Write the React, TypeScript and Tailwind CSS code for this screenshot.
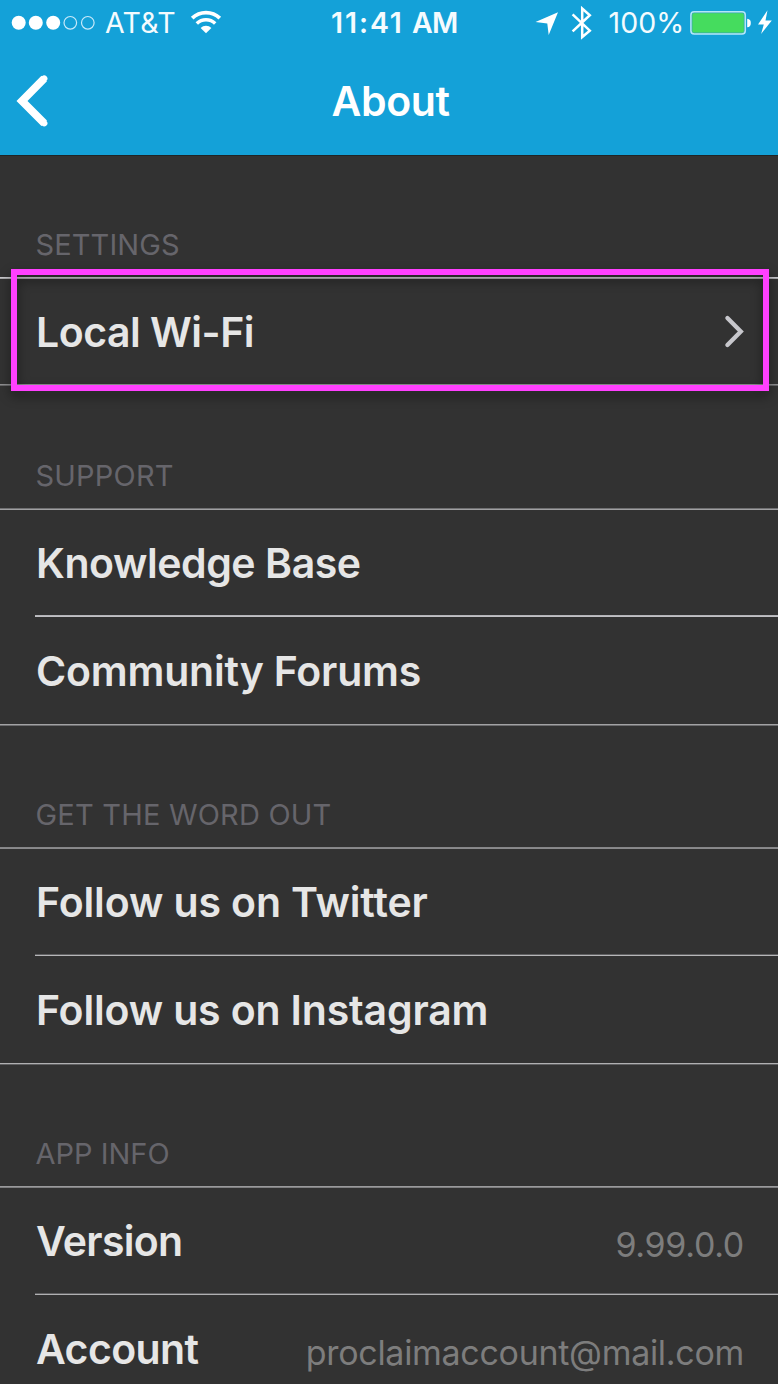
import type { ReactNode } from "react";

function SignalDots() {
  return (
    <svg className="ml-[11px] h-[46px] w-[85px] shrink-0" viewBox="0 0 85 46" fill="none">
      <circle cx="7.7" cy="22.8" r="7" fill="#fff" />
      <circle cx="24.8" cy="22.8" r="7" fill="#fff" />
      <circle cx="42.2" cy="22.8" r="7" fill="#fff" />
      <circle cx="59.3" cy="22.8" r="6.3" stroke="#c9eafa" strokeWidth="1.2" />
      <circle cx="76.8" cy="22.8" r="6.3" stroke="#c9eafa" strokeWidth="1.2" />
    </svg>
  );
}

function WifiIcon() {
  return (
    <svg className="h-[46px] w-[32px] shrink-0" viewBox="190 0 32 46" fill="none">
      <path d="M192.2 18.2a19.8 19.8 0 0 1 27.6 0" stroke="#fff" strokeWidth="3.8" />
      <path d="M196.8 23.4a13.2 13.2 0 0 1 18.4 0" stroke="#fff" strokeWidth="3.5" />
      <path d="M200.6 28a7.8 7.8 0 0 1 10.8 0L206 33.2Z" fill="#fff" />
    </svg>
  );
}

function StatusIcons() {
  return (
    <svg className="h-[46px] w-[60px] shrink-0" viewBox="534 0 60 46" fill="none">
      <path d="M558 12.3 548.7 35 547.3 23.6 535.5 22Z" fill="#fff" />
      <path d="M572.6 14.4 589.8 30.6 582.2 37V8.6L589.8 15.2 572.6 31.4" stroke="#fff" strokeWidth="2.5" />
    </svg>
  );
}

function Battery() {
  return (
    <svg className="h-[46px] w-[88px] shrink-0" viewBox="690 0 88 46" fill="none">
      <rect x="690.9" y="11.7" width="54.4" height="22.3" rx="3.2" fill="#35a9b0" stroke="#b4e6f8" strokeWidth="1.5" />
      <rect x="692.4" y="13.2" width="51.4" height="19.3" rx="1.6" fill="#45dc5e" />
      <path d="M747.2 18.7c2.6.2 3.6 1.8 3.6 4.3s-1 4.1-3.6 4.3Z" fill="#fff" />
      <path d="M767.5 10.3 758 24.4H763.8L761.1 34 771.8 20.6H765.5Z" fill="#fff" />
    </svg>
  );
}

function SectionTitle({ className, children }: { className: string; children: ReactNode }) {
  return (
    <h2 className={`flex shrink-0 items-end pb-[15px] pl-[35.5px] text-[29px] leading-[35px] font-normal text-[#66656b] ${className}`}>
      {children}
    </h2>
  );
}

function Line({ className }: { className: string }) {
  return <div className={`h-[2px] shrink-0 border-y ${className}`} />;
}

function Row({ height, label, children, className = "" }: { height: string; label: string; children?: ReactNode; className?: string }) {
  return (
    <div className={`flex shrink-0 items-center justify-between pr-[34px] pl-[36px] ${height}`}>
      <span className={`text-[41px] leading-[50px] font-semibold text-[#e6e6e6] ${className}`}>{label}</span>
      {children}
    </div>
  );
}

export default function App() {
  return (
    <div className="relative flex h-[1384px] w-[778px] flex-col overflow-hidden bg-[#323232] font-['Inter',sans-serif] whitespace-nowrap">
      <header className="flex h-[155px] shrink-0 flex-col bg-[#14a1d8] text-white">
        <div className="flex h-[46px] items-center text-[28.5px] leading-[46px] text-[#f4fbfe]">
          <SignalDots />
          <span className="ml-[9px] w-[85px] tracking-[0.3px]">AT&amp;T</span>
          <WifiIcon />
          <span className="ml-[109px] flex w-[203px] font-semibold">
            <span className="w-[81px] tracking-[1.9px]">11:41 </span>
            <span className="tracking-[-0.8px]">AM</span>
          </span>
          <StatusIcons />
          <span className="ml-[14.5px] w-[81.5px] tracking-[0.1px]">100%</span>
          <Battery />
        </div>
        <div className="flex h-[109px] items-center">
          <svg className="ml-[14px] h-[60px] w-[40px]" viewBox="14 71 40 60" fill="none">
            <path d="M44.2 78.6 22 101 44.2 123.2" stroke="#fff" strokeWidth="7.8" strokeLinejoin="miter" />
            <path d="M44.2 78.6 22 101 44.2 123.2" stroke="#fff" strokeWidth="6.4" strokeLinecap="round" />
          </svg>
          <h1 className="ml-[277.5px] text-[41px] leading-[50px] font-semibold tracking-[-0.37px]">About</h1>
        </div>
      </header>

      <SectionTitle className="h-[122px] border-t border-[#1f2527] tracking-[0.1px]">SETTINGS</SectionTitle>
      <Line className="border-t-[#c8c8cc] border-b-[#a8a8aa]" />
      <Row height="h-[105px]" label="Local Wi-Fi" className="tracking-[-0.5px]">
        <svg className="mb-[2px] h-[36px] w-[22px]" viewBox="0 0 22 36" fill="none">
          <path d="M5.4 5 18.8 18.5 5.4 32" stroke="#c7c7cc" strokeWidth="4.3" strokeLinecap="round" />
        </svg>
      </Row>
      <Line className="border-t-[#8e8e90] border-b-[#666668]" />

      <SectionTitle className="h-[122px] tracking-[0.2px]">SUPPORT</SectionTitle>
      <Line className="border-t-[#707072] border-b-[#a0a0a2]" />
      <Row height="h-[105px]" label="Knowledge Base" className="tracking-[-0.44px]" />
      <Line className="ml-[35px] border-t-[#b4b4b8] border-b-[#c0c0c4]" />
      <Row height="h-[107px]" label="Community Forums" className="tracking-[-0.2px]" />
      <Line className="border-t-[#a2a2a4] border-b-[#6c6c6e]" />

      <SectionTitle className="h-[121px] tracking-[0.2px]">GET THE WORD OUT</SectionTitle>
      <Line className="border-t-[#868688] border-b-[#8a8a8c]" />
      <Row height="h-[105px]" label="Follow us on Twitter" className="tracking-[-0.12px]" />
      <Line className="ml-[35px] border-t-[#606062] border-b-[#b6b6b8]" />
      <Row height="h-[107px]" label="Follow us on Instagram" className="tracking-[-0.16px]" />
      <Line className="border-t-[#b0b0b2] border-b-[#606062]" />

      <SectionTitle className="h-[121px]">APP INFO</SectionTitle>
      <Line className="border-t-[#9a9a9c] border-b-[#7e7e80]" />
      <Row height="h-[105px]" label="Version" className="tracking-[-0.7px]">
        <span className="pt-[8px] text-[34px] leading-[42px] tracking-[-0.3px] text-[#7d7d7d]">9.99.0.0</span>
      </Row>
      <Line className="ml-[35px] border-t-[#606062] border-b-[#b0b0b2]" />
      <Row height="h-[107px]" label="Account" className="tracking-[-0.6px]">
        <span className="pt-[9px] text-[34px] leading-[42px] tracking-[-0.3px] text-[#7d7d7d]">proclaimaccount@mail.com</span>
      </Row>

      <div className="absolute top-[269px] left-[11px] h-[122px] w-[758px] border-[6px] border-[#ff40ff] drop-shadow-[0_5px_6px_rgba(0,0,0,0.45)]" />
    </div>
  );
}
